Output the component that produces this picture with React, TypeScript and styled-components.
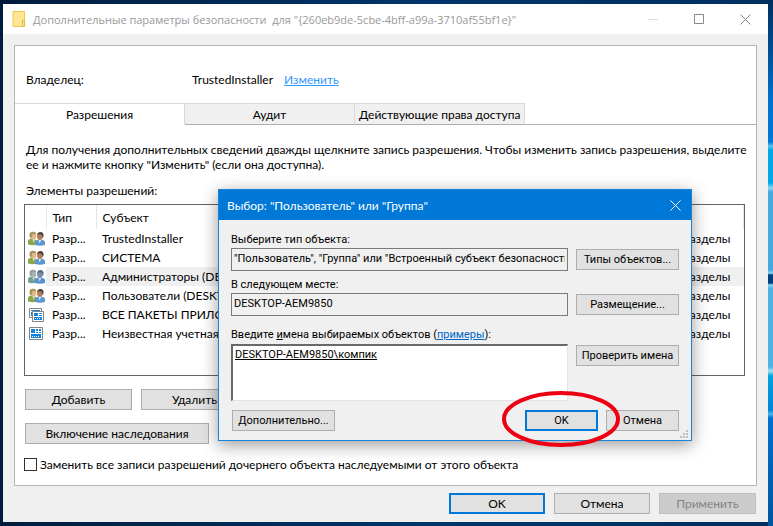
import React from "react";
import styled, { createGlobalStyle, css } from "styled-components";

const GlobalStyle = createGlobalStyle`
  *, *::before, *::after { box-sizing: border-box; }
  body { margin: 0; }
  body, button, input, textarea, table {
    font-family: Lato, "Noto Sans", sans-serif;
    font-size: 12px;
    line-height: 15px;
    color: #000;
  }
`;

const Desktop = styled.div`
  position: relative;
  min-height: 100vh;
  padding: 4px 5px 4px 3px;
  display: flex;
  background:
    linear-gradient(180deg, #00305e 0px, #00559f 60px, #0072cf 100px, #0078d7 142px, #5cc4f0 146px, #00a8e8 150px,
      #00a8e8 183px, #8fd8f2 188px, #45a9e0 192px, #45a9e0 270px, #8fd8f2 273px, #00407f 275px, #00407f 283px, #8fd8f2 285px,
      #4db4e4 288px, #4db4e4 367px, #a5e2f2 371px, #00a2e0 376px, #0085d8 410px, #4db8ee 414px, #0070d0 418px, #00569f 100%)
      right top / 5px 100% no-repeat,
    linear-gradient(90deg, #001c3c, #00356b 55%, #00305e);
`;

const Window = styled.section`
  flex: 1;
  min-width: 0;
  display: flex;
  flex-direction: column;
  background: #f0f0f0;
`;

const TitleBar = styled.header`
  display: flex;
  align-items: center;
  height: 30px;
  padding: 0 17px 0 9px;
  background: #fff;
  color: #999;
`;

const Title = styled.h1`
  flex: 1;
  margin: 0 0 0 7px;
  font-family: "Open Sans", "Noto Sans", sans-serif;
  font-size: 11px;
  font-weight: 400;
  white-space: pre;
`;

const Caption = styled.div`
  display: flex;
  gap: 35px;
`;

const GlyphButton = styled.button`
  display: flex;
  padding: 0;
  border: 0;
  background: none;
  color: #888;
  &:disabled { color: #ddd; }
`;

const Sheet = styled.main`
  flex: 1;
  display: flex;
  flex-direction: column;
  margin: 11px 11px 0;
  border: 1px solid #b5b5b5;
  background: #fff;
`;

const Owner = styled.div`
  display: flex;
  align-items: center;
  height: 57px;
  padding: 10px 11px 0;
`;

const OwnerLabel = styled.span`
  width: 166px;
`;

const OwnerLink = styled.a`
  margin-left: 11px;
  color: #3399ff;
`;

const Tabs = styled.div`
  display: flex;
  height: 22px;
`;

const TabFill = styled.span`
  flex: 1;
  border-bottom: 1px solid #b0b0b0;
`;

const Tab = styled.button<{ $active?: boolean }>`
  width: 170px;
  padding: 0 4px;
  border: 1px solid #d9d9d9;
  border-left: 0;
  border-bottom-color: #b0b0b0;
  background: #f0f0f0;
  white-space: nowrap;
  ${(p) => p.$active && css`
    background: #fff;
    border-bottom-color: #fff;
  `}
`;

const Page = styled.div`
  flex: 1;
  padding: 17px 11px 11px 9px;
`;

const Note = styled.p`
  margin: 0 -8px 11px 2px;
`;

const Heading = styled.h2`
  margin: 0 0 6px 2px;
  font-size: 12px;
  font-weight: 400;
`;

const TableFrame = styled.div`
  height: 172px;
  border: 1px solid #646464;
`;

const Entries = styled.table`
  width: 100%;
  table-layout: fixed;
  border-collapse: collapse;
  th, td {
    padding: 0 6px;
    text-align: left;
    font-weight: 400;
    white-space: nowrap;
    overflow: hidden;
  }
  th {
    height: 24px;
    border-right: 1px solid #e5e5e5;
  }
  td { height: 19px; }
  td:first-child { padding: 0 0 0 3px; }
  td:last-child { text-align: right; padding-right: 13px; }
  td svg { display: block; }
`;

const Entry = styled.tr<{ $selected?: boolean }>`
  td:not(:first-child) { background: ${(p) => (p.$selected ? "#f0f0f0" : "transparent")}; }
`;

const Col = styled.col<{ $w: number }>`
  width: ${(p) => p.$w}px;
`;

const PushButton = styled.button<{ $w: number; $primary?: boolean }>`
  width: ${(p) => p.$w}px;
  height: 21px;
  padding: 0;
  border: ${(p) => (p.$primary ? "2px solid #0078d7" : "1px solid #adadad")};
  background: #e1e1e1;
  white-space: nowrap;
  &:disabled {
    background: #ccc;
    border-color: #bfbfbf;
    color: #838383;
  }
`;

const ButtonRow = styled.div`
  display: flex;
  gap: 9px;
  margin: 13px 0 0 1px;
`;

const CheckLabel = styled.label`
  display: flex;
  align-items: center;
  gap: 3px;
  margin-top: 13px;
`;

const Check = styled.input`
  appearance: none;
  width: 13px;
  height: 13px;
  margin: 0;
  border: 1px solid #333;
  background: #fff;
`;

const Footer = styled.footer`
  display: flex;
  justify-content: flex-end;
  gap: 9px;
  padding: 7px 12px 8px;
`;

const Dialog = styled.section`
  position: absolute;
  left: 218px;
  top: 189px;
  width: 474px;
  border: 1px solid #1883d7;
  background: #f0f0f0;
  box-shadow: 0 4px 16px rgba(0, 0, 0, 0.4);
  button, input, textarea, label {
    font-family: Roboto, sans-serif;
    font-size: 11px;
    line-height: 13px;
  }
`;

const DialogTitle = styled.header`
  display: flex;
  justify-content: space-between;
  align-items: center;
  height: 30px;
  padding: 0 10px 0 8px;
  background: #0078d7;
  color: #fff;
  h2 { margin: 0; font-size: 12px; font-weight: 400; }
  button { color: #fff; }
`;

const DialogBody = styled.div`
  display: grid;
  gap: 7px;
  padding: 13px 12px 9px;
`;

const FieldRow = styled.div`
  display: grid;
  grid-template-columns: 1fr 103px;
  gap: 2px 8px;
  button { margin-top: 1px; }
  label { grid-column: 1 / -1; }
`;

const NamesRow = styled(FieldRow)`
  padding-top: 5px;
  row-gap: 3px;
`;

const fieldBox = css`
  width: 100%;
  margin: 0;
  padding: 0 2px;
  border: 1px solid #7a7a7a;
  border-radius: 0;
  outline: 0;
`;

const Field = styled.input`
  ${fieldBox}
  height: 23px;
  padding-bottom: 2px;
  background: #f0f0f0;
`;

const Names = styled.textarea`
  ${fieldBox}
  display: block;
  height: 57px;
  padding-top: 2px;
  resize: none;
  background: #fff;
  border-width: 2px 1px 1px 2px;
  border-color: #696969 #e3e3e3 #e3e3e3 #696969;
  text-decoration: underline;
`;

const ExampleLink = styled.a`
  color: #0066cc;
`;

const Actions = styled.div`
  display: flex;
  gap: 8px;
  padding: 2px 0 0 1px;
`;

const Spacer = styled.span`
  flex: 1;
`;

const Grip = styled.svg`
  position: absolute;
  right: 3px;
  bottom: 2px;
`;

const Ring = styled.svg`
  position: absolute;
  left: 501px;
  top: 389px;
  pointer-events: none;
`;

const FolderIcon = () => (
  <svg width="14" height="16" viewBox="0 0 14 16">
    <path d="M1 .5h11.500v15H1z" fill="#ffe594" stroke="#edc84c" />
    <path d="M10.500 9.500h2v6h-2z" fill="#ffe594" stroke="#e3bb3c" />
  </svg>
);

const CloseIcon = () => (
  <svg width="11" height="11" viewBox="0 0 11 11">
    <path d="M.5.5l10 10M10.500.5l-10 10" stroke="currentColor" fill="none" />
  </svg>
);

const UsersIcon = ({ pale }: { pale?: boolean }) => (
  <svg width="17" height="16" viewBox="0 0 17 16">
    <path d="M0 13.500V10q.5-2.500 4-2.500T8.500 10v3.500q-4 1.500-8.500 0z" fill={pale ? "#6f9f98" : "#8ba848"} />
    <path d="M4.500 7.500l1 4L7 8z" fill="#e6ece0" />
    <ellipse cx="5.500" cy="5" rx="2.800" ry="3.400" fill={pale ? "#a8b4b4" : "#e0b88c"} />
    <path d="M1.500 5Q1 .8 5 .8 8.600.8 8 3.500 5 2 4 4L3.500 7.500Q1.600 7 1.500 5z" fill={pale ? "#8fa2a2" : "#a8935a"} />
    <path d="M7 14V11q.5-2.500 5-2.500t5 2.500v3q-5 1.500-10 0z" fill={pale ? "#5a93cc" : "#5c97d2"} />
    <path d="M10.500 8.500l1 4 2-4z" fill="#e2edf6" />
    <ellipse cx="11.800" cy="5.500" rx="2.700" ry="3.500" fill={pale ? "#7b8ca4" : "#b57c56"} />
    <path d="M9 4.500Q9 1 12.500 1q3.500.2 3 4.500l-1 2Q14.500 3.500 12 3.300 9.800 3.300 9 4.500z" fill={pale ? "#5b6b82" : "#51423a"} />
  </svg>
);

const AppIcon = ({ stacked }: { stacked?: boolean }) => (
  <svg width="17" height="16" viewBox="0 0 17 16">
    {stacked ? (
      <>
        <path d="M1.500 1.500h12v9h-12z" fill="#fff" stroke="#858585" />
        <path d="M3 3h9v1H3zM3 5h1v4H3z" fill="#1683d8" />
        <path d="M4.500 4.500h11v10h-11z" fill="#fff" stroke="#858585" />
        <path d="M6 6h4v3H6zM11 6h3v1h-3zM11 8h3v1h-3zM6 10h8v3H6z" fill="#1683d8" />
        <path d="M7 11h1v1H7zM9 11h1v1H9zM11 11h1v1h-1z" fill="#fff" />
      </>
    ) : (
      <>
        <path d="M1.500 1.500h13v12h-13z" fill="#fff" stroke="#858585" />
        <path d="M3 3h4v4H3zM8 3h2v2H8zM11 3h2v2h-2zM8 6h2v1H8zM11 6h2v1h-2zM3 8h10v4H3z" fill="#1683d8" />
        <path d="M4 10h1v1H4zM6 10h1v1H6zM8 10h1v1H8zM10 10h1v1h-1z" fill="#fff" />
      </>
    )}
  </svg>
);

const entries = [
  { icon: <UsersIcon />, name: "TrustedInstaller" },
  { icon: <UsersIcon />, name: "СИСТЕМА" },
  { icon: <UsersIcon pale />, name: "Администраторы (DESKTOP", selected: true },
  { icon: <UsersIcon />, name: "Пользователи (DESKTOP" },
  { icon: <AppIcon stacked />, name: "ВСЕ ПАКЕТЫ ПРИЛОЖЕНИЙ" },
  { icon: <AppIcon />, name: "Неизвестная учетная запись" },
];

export default function App() {
  return (
    <Desktop>
      <GlobalStyle />
      <Window>
        <TitleBar>
          <FolderIcon />
          <Title>{'Дополнительные параметры безопасности  для "{260eb9de-5cbe-4bff-a99a-3710af55bf1e}"'}</Title>
          <Caption>
            <GlyphButton aria-label="Свернуть" disabled>
              <svg width="11" height="11"><path d="M0 5.500h10" stroke="currentColor" /></svg>
            </GlyphButton>
            <GlyphButton aria-label="Развернуть">
              <svg width="11" height="11"><path d="M.5.5h9v9h-9z" stroke="currentColor" fill="none" /></svg>
            </GlyphButton>
            <GlyphButton aria-label="Закрыть"><CloseIcon /></GlyphButton>
          </Caption>
        </TitleBar>
        <Sheet>
          <Owner>
            <OwnerLabel>Владелец:</OwnerLabel>
            <span>TrustedInstaller</span>
            <OwnerLink href="#owner">Изменить</OwnerLink>
          </Owner>
          <Tabs role="tablist">
            <Tab role="tab" aria-selected $active>Разрешения</Tab>
            <Tab role="tab">Аудит</Tab>
            <Tab role="tab">Действующие права доступа</Tab>
            <TabFill />
          </Tabs>
          <Page>
            <Note>
              Для получения дополнительных сведений дважды щелкните запись разрешения. Чтобы изменить запись
              разрешения, выделите ее и нажмите кнопку "Изменить" (если она доступна).
            </Note>
            <Heading id="entries">Элементы разрешений:</Heading>
            <TableFrame>
              <Entries aria-labelledby="entries">
                <colgroup>
                  <Col $w={21} />
                  <Col $w={50} />
                  <Col $w={180} />
                  <col />
                </colgroup>
                <thead>
                  <tr>
                    <th />
                    <th>Тип</th>
                    <th>Субъект</th>
                    <th />
                  </tr>
                </thead>
                <tbody>
                  {entries.map((e) => (
                    <Entry key={e.name} $selected={e.selected}>
                      <td>{e.icon}</td>
                      <td>Разр...</td>
                      <td>{e.name}</td>
                      <td>подразделы</td>
                    </Entry>
                  ))}
                </tbody>
              </Entries>
            </TableFrame>
            <ButtonRow>
              <PushButton $w={107}>Добавить</PushButton>
              <PushButton $w={107}>Удалить</PushButton>
            </ButtonRow>
            <ButtonRow>
              <PushButton $w={184}>Включение наследования</PushButton>
            </ButtonRow>
            <CheckLabel>
              <Check type="checkbox" />
              Заменить все записи разрешений дочернего объекта наследуемыми от этого объекта
            </CheckLabel>
          </Page>
        </Sheet>
        <Footer>
          <PushButton $w={96} $primary>OK</PushButton>
          <PushButton $w={96}>Отмена</PushButton>
          <PushButton $w={97} disabled>Применить</PushButton>
        </Footer>
      </Window>
      <Dialog role="dialog" aria-labelledby="dialog-title">
        <DialogTitle>
          <h2 id="dialog-title">Выбор: "Пользователь" или "Группа"</h2>
          <GlyphButton aria-label="Закрыть"><CloseIcon /></GlyphButton>
        </DialogTitle>
        <DialogBody>
          <FieldRow>
            <label htmlFor="kind">Выберите тип объекта:</label>
            <Field id="kind" readOnly value={'"Пользователь", "Группа" или "Встроенный субъект безопасности"'} />
            <PushButton $w={103}>Типы объектов...</PushButton>
          </FieldRow>
          <FieldRow>
            <label htmlFor="place">В следующем месте:</label>
            <Field id="place" readOnly value="DESKTOP-AEM9850" />
            <PushButton $w={103}>Размещение...</PushButton>
          </FieldRow>
          <NamesRow>
            <label htmlFor="names">
              Введите <u>и</u>мена выбираемых объектов (<ExampleLink href="#examples">примеры</ExampleLink>):
            </label>
            <Names id="names" spellCheck={false} defaultValue={"DESKTOP-AEM9850\\компик"} />
            <PushButton $w={103}>Проверить имена</PushButton>
          </NamesRow>
          <Actions>
            <PushButton $w={103}>Дополнительно...</PushButton>
            <Spacer />
            <PushButton $w={73} $primary>OK</PushButton>
            <PushButton $w={73}>Отмена</PushButton>
          </Actions>
        </DialogBody>
        <Grip width="8" height="8">
          <path d="M6 0h2v2H6zM3 3h2v2H3zM6 3h2v2H6zM0 6h2v2H0zM3 6h2v2H3zM6 6h2v2H6z" fill="#bfbfbf" />
        </Grip>
      </Dialog>
      <Ring width="120" height="60">
        <ellipse cx="60" cy="30" rx="57" ry="26" fill="none" stroke="#ed0012" strokeWidth="4" />
      </Ring>
    </Desktop>
  );
}
